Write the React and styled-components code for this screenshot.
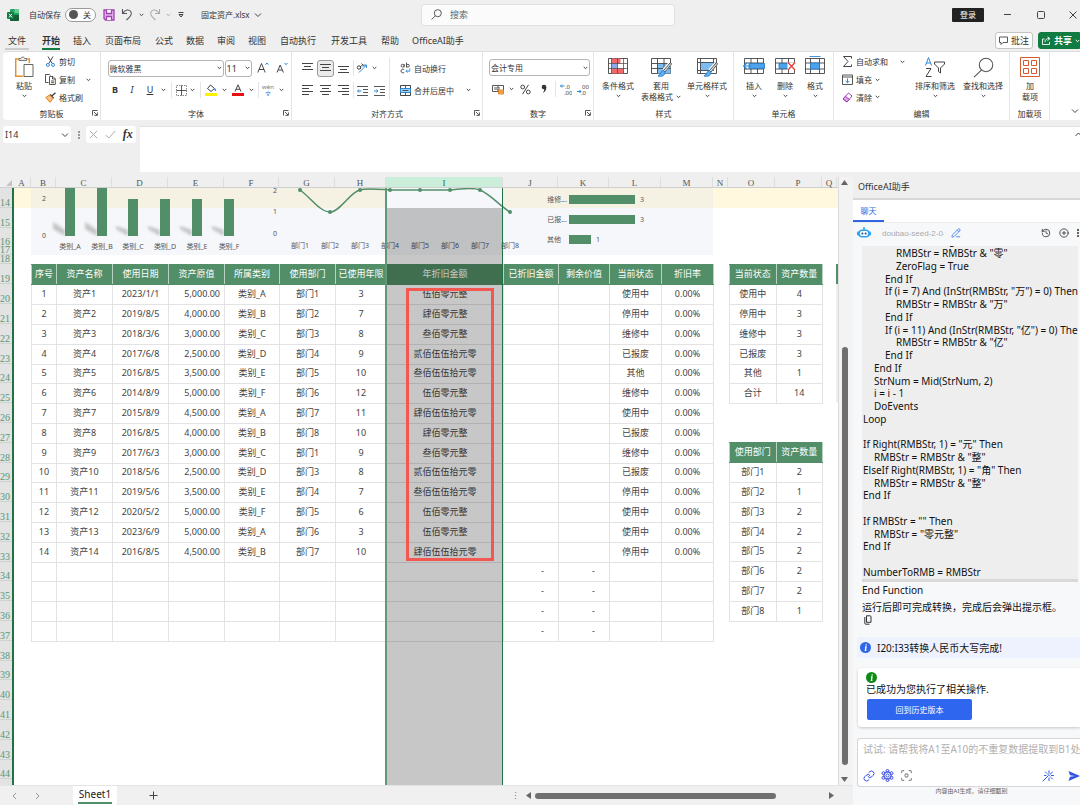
import styled, { createGlobalStyle, css } from 'styled-components'
import { CirclePlus, EllipsisVertical, Focus, History, Link, PencilLine } from 'lucide-react'

const GlobalStyle = createGlobalStyle`
  *, *::before, *::after {
    box-sizing: border-box;
  }
  body {
    margin: 0;
    overflow: hidden;
    background: #efefef;
    color: #333;
    font-family: 'Noto Sans', 'Noto Sans CJK SC', sans-serif;
    font-size: 9px;
  }
  button, input, select, textarea {
    margin: 0;
    padding: 0;
    border: 0;
    background: none;
    color: inherit;
    font: inherit;
  }
  svg {
    display: block;
    flex: none;
  }
`

const green = '#528e67'

/* ---------- shell ---------- */

const Window = styled.div`
  display: flex;
  flex-direction: column;
  height: 100vh;
`

const Workspace = styled.div`
  display: flex;
  flex: 1;
  min-height: 0;
`

const Book = styled.main`
  display: flex;
  flex-direction: column;
  flex: 1;
  min-width: 0;
`

/* ---------- title bar ---------- */

const TitleBar = styled.header`
  display: flex;
  align-items: center;
  height: 29px;
  font-size: 8px;
`

const QuickAccess = styled.div`
  display: flex;
  align-items: center;
  flex: 0 0 421px;
  padding-left: 7px;
`

const AutoSave = styled.label`
  display: flex;
  align-items: center;
  gap: 4px;
  margin: 0 7px 0 10px;
`

const Toggle = styled.span`
  display: flex;
  align-items: center;
  gap: 5px;
  width: 31px;
  height: 14px;
  padding-left: 3px;
  border: 1px solid #9a9a9a;
  border-radius: 7px;
  background: #fff;

  input {
    appearance: none;
    width: 9px;
    height: 9px;
    border-radius: 50%;
    background: #555;
  }
`

const PlainButton = styled.button`
  display: flex;
  align-items: center;
  justify-content: center;
  flex: none;
  width: ${(p) => p.$w}px;
  height: 18px;
`

const CloseButton = styled(PlainButton)`
  justify-content: flex-end;
  padding-right: 3px;
`

const FileName = styled.button`
  display: flex;
  align-items: center;
  gap: 4px;
  margin-left: 10px;
`

const SearchBox = styled.label`
  display: flex;
  align-items: center;
  gap: 8px;
  flex: 0 0 254px;
  height: 22px;
  padding-left: 9px;
  border: 1px solid #e0e0e0;
  border-radius: 3px;
  background: #fbfbfb;
  font-size: 9px;

  input {
    width: 180px;
  }
  input::placeholder {
    color: #666;
  }
`

const WindowButtons = styled.div`
  display: flex;
  align-items: center;
  margin-left: auto;
`

const Login = styled.button`
  width: 32px;
  height: 14px;
  margin-right: 7px;
  border-radius: 1px;
  background: #222;
  color: #fff;
  line-height: 14px;
`

/* ---------- ribbon tabs ---------- */

const TabBar = styled.nav`
  display: flex;
  align-items: center;
  gap: 13px;
  height: 22px;
  padding: 3px 0 0 5px;
`

const Tab = styled.button`
  min-width: ${(p) => (p.$wide ? 38 : 18)}px;
  height: 16px;
  border-bottom: 2px solid transparent;
  line-height: 14px;
  white-space: nowrap;

  ${(p) =>
    p.$file &&
    css`
      width: 24px;
      border-color: #ccc;
    `}
  ${(p) =>
    p.$active &&
    css`
      border-color: #107c41;
      font-weight: 700;
    `}
`

const TabActions = styled.div`
  display: flex;
  align-self: flex-start;
  gap: 5px;
  margin-left: auto;
`

const ActionButton = styled.button`
  display: flex;
  align-items: center;
  gap: 3px;
  width: ${(p) => (p.$primary ? 42 : 38)}px;
  height: 17px;
  padding-left: 3px;
  border: 1px solid ${(p) => (p.$primary ? '#107c41' : '#c4c4c4')};
  border-radius: ${(p) => (p.$primary ? '3px 0 0 3px' : '3px')};
  background: ${(p) => (p.$primary ? '#107c41' : '#fff')};
  color: ${(p) => (p.$primary ? '#fff' : '#333')};
  font-weight: ${(p) => (p.$primary ? 700 : 400)};
  white-space: nowrap;
`

/* ---------- ribbon ---------- */

const Ribbon = styled.section`
  display: flex;
  height: 69px;
  margin-left: 3px;
  border-top: 1px solid #dedede;
  border-radius: 4px 0 0 4px;
  background: #fff;
  font-size: 8px;
`

const Group = styled.div`
  display: flex;
  flex-direction: column;
  flex: 0 0 ${(p) => p.$w}px;
  min-width: 0;
  border-right: 1px solid #e4e4e4;
`

const GroupBody = styled.div`
  display: flex;
  height: 54px;
`

const GroupFoot = styled.div`
  display: flex;
  align-items: center;
  height: 14px;
  padding: 0 2px 0 ${(p) => (p.$plain ? 2 : 8)}px;

  span {
    flex: 1;
    text-align: center;
  }
`

const Stack = styled.div`
  display: flex;
  flex-direction: column;
  gap: ${(p) => (p.$tight ? 0 : 4)}px;
  padding: ${(p) => (p.$tight ? 1 : 7)}px 0 0 ${(p) => p.$left ?? 6}px;
  flex: 0 0 auto;
`

const Tools = styled.div`
  display: grid;
  grid-template-columns: ${(p) => p.$cols};
  align-items: center;
  justify-items: center;
  height: 18px;
`

const Tool = styled.button`
  display: grid;
  place-items: center;
  width: ${(p) => (p.$on ? '17px' : '100%')};
  height: 17px;
  border: ${(p) => (p.$on ? '1px solid #9a9a9a' : '0')};
  border-radius: 3px;
  background: ${(p) => (p.$on ? '#ebebeb' : 'none')};
`

const Letter = styled.span`
  font-size: 9px;
  line-height: 12px;
  font-weight: ${(p) => (p.$bold ? 700 : 400)};
  font-style: ${(p) => (p.$italic ? 'italic' : 'normal')};
  text-decoration: ${(p) => (p.$under ? 'underline' : 'none')};
`

const Divider = styled.i`
  width: 1px;
  height: ${(p) => (p.$tall ? 42 : 16)}px;
  margin-top: ${(p) => (p.$tall ? 6 : 0)}px;
  background: #e4e4e4;
`

const Row = styled.button`
  display: flex;
  align-items: center;
  gap: 3px;
  height: 18px;
  white-space: nowrap;

  svg:last-child {
    margin-left: ${(p) => p.$push || 0}px;
  }
`

const Big = styled.button`
  display: flex;
  flex-direction: column;
  align-items: center;
  flex: 0 0 ${(p) => p.$w}px;
  min-width: 0;
  padding-top: 3px;
  line-height: 11px;
  white-space: nowrap;
`

const BigIcon = styled.span`
  display: grid;
  place-items: center;
  height: 24px;
  margin-bottom: 1px;
`

const BigLine = styled.span`
  display: flex;
  align-items: center;
  gap: 3px;
  min-height: 10px;
`

const Picker = styled.span`
  display: grid;
  align-items: center;
  width: ${(p) => p.$w}px;
  height: 17px;

  select, svg {
    grid-area: 1 / 1;
  }
  select {
    appearance: none;
    width: 100%;
    height: 17px;
    padding-left: 1px;
    border: 1px solid #b4b4b4;
    border-radius: 3px;
    background: #fff;
    font-size: ${(p) => (p.$num ? 9 : 8)}px;
  }
  svg {
    justify-self: end;
    margin-right: 2px;
    pointer-events: none;
  }
`

const RibbonEnd = styled.div`
  display: flex;
  align-items: flex-end;
  justify-content: flex-end;
  flex: 1;
  padding: 0 1px 6px 0;
`

/* ---------- formula bar ---------- */

const FormulaBar = styled.section`
  display: flex;
  align-items: flex-start;
  height: 57px;
  padding: 6px 0 0 3px;
`

const NameBox = styled.label`
  display: flex;
  align-items: center;
  width: 68px;
  height: 17px;
  padding: 0 2px 0 2px;
  border-radius: 3px;
  background: #fff;
  font-size: 9px;

  input {
    flex: 1;
    width: 40px;
  }
`

const FxBox = styled.div`
  display: flex;
  align-items: center;
  justify-content: space-around;
  width: 50px;
  height: 17px;
  border-radius: 3px;
  background: #fff;

  em {
    font: italic bold 12px 'Liberation Serif', serif;
  }
`

const FormulaField = styled.div`
  display: flex;
  flex: 1;
  height: 46px;
  margin-left: 4px;
  padding-top: 5px;
  border-top: 1px solid #e0e0e0;
  background: #fff;

  textarea {
    flex: 1;
    height: 36px;
    resize: none;
    outline: 0;
  }
`

/* ---------- sheet ---------- */

const SheetArea = styled.div`
  display: flex;
  flex: 1;
  min-height: 0;
`

const Sheet = styled.div`
  display: flex;
  flex-direction: column;
  flex: 1;
  min-width: 0;
  overflow: hidden;
`

const ColumnHeads = styled.div`
  display: flex;
  flex: 0 0 11px;
  border-bottom: 1px solid #cfcfcf;
  font-family: 'Liberation Serif', serif;
  font-size: 9px;
  line-height: 12px;
`

const ColumnHead = styled.span`
  flex: 0 0 ${(p) => p.$w}px;
  height: 10px;
  border-right: 1px solid #dedede;
  background: ${(p) => (p.$on ? '#caeeda' : 'none')};
  color: ${(p) => (p.$on ? '#217346' : '#555')};
  text-align: center;
`

const Corner = styled.span`
  display: flex;
  align-items: flex-end;
  justify-content: flex-end;
  flex: 0 0 13px;
  padding: 0 1px 1px 0;
`

const Grid = styled.div`
  display: flex;
  flex: 1;
  min-height: 0;
  overflow: hidden;
`

const RowHeads = styled.div`
  flex: 0 0 14px;
  min-width: 0;
  border-right: 2px solid #217346;
  background: #e2e3e2;
  color: #5c9673;
  font-family: 'Liberation Serif', serif;
  font-size: 10px;
`

const rowHeight = css`
  height: 20px;

  &:nth-child(5n) {
    height: 19px;
  }
`

const RowHead = styled.div`
  display: flex;
  align-items: flex-end;
  justify-content: center;
  padding-right: 2px;
  border-bottom: 1px solid #cfd3d0;
  line-height: 9px;

  ${(p) =>
    p.$h
      ? css`
          height: ${p.$h}px;
        `
      : rowHeight}
`

const Canvas = styled.div`
  position: relative;
  flex: 1;
  min-width: 0;
  background: linear-gradient(#fff7de, #fff7de) 0 0 / 100% 20px no-repeat #fff;
`

const ActiveCell = styled.div`
  position: absolute;
  top: 0;
  left: 372px;
  width: 117px;
  height: 20px;
  background: #fff;
`

const ColumnSelection = styled.div`
  position: absolute;
  top: 0;
  bottom: 0;
  left: 371px;
  width: 118px;
  border: solid #217346;
  border-width: 0 1px 0 2px;
  border-left-color: #5f987a;

  &::before {
    content: '';
    display: block;
    height: 100%;
    background: linear-gradient(rgba(0, 0, 0, 0.22), rgba(0, 0, 0, 0.22)) 0 20px no-repeat;
  }
`

const RedFrame = styled.div`
  position: absolute;
  top: 100px;
  left: 392px;
  width: 88px;
  height: 273px;
  border: 3px solid #f2584f;
`

const Charts = styled.div`
  display: flex;
  position: relative;
  width: 682px;
  height: 67px;
  margin-left: 17px;
  background: rgba(226, 231, 242, 0.35);

  text {
    fill: #555;
    font-size: 7px;
    text-anchor: middle;
  }
`

const Tables = styled.div`
  display: flex;
  align-items: flex-start;
  padding: 9px 0 0 17px;
`

const Side = styled.div`
  display: flex;
  flex-direction: column;
  gap: 38px;
  margin: 0 13px 0 15px;
`

const NextTable = styled.div`
  flex: 1;
  height: 139px;
  background: linear-gradient(${green}, ${green}) 0 0 / 100% 20px no-repeat #eee;
`

const DataTable = styled.table`
  table-layout: fixed;
  width: ${(p) => p.$w}px;
  border-collapse: collapse;
  color: #444;
  font-size: 9px;
  line-height: 12px;

  th, td {
    padding: 0 0 2px;
    border: 1px solid #e3e3e3;
    text-align: center;
    white-space: nowrap;
  }
  thead tr {
    height: 20px;
  }
  th {
    border-color: ${green} #b9d3c2;
    background: ${green};
    color: #fff;
    font-weight: 400;
  }
  tbody tr {
    ${rowHeight}
  }
`

const Col = styled.col`
  width: ${(p) => p.$w}px;
`

const Money = styled.td`
  && {
    padding-right: ${(p) => (p.$dash ? 14 : 4)}px;
    text-align: right;
  }
`

/* ---------- scrollbars and sheet tabs ---------- */

const VScroll = styled.div`
  display: flex;
  flex-direction: column;
  align-items: center;
  width: 15px;
  padding: 2px 3px 2px 0;
  border-left: 1px solid #dcdcdc;
  background: #f3f3f3;
`

const VThumb = styled.i`
  flex: 0 1 418px;
  width: 6px;
  margin: auto 0 11px;
  border-radius: 3px;
  background: #6f6f6f;
`

const SheetBar = styled.footer`
  display: flex;
  align-items: center;
  flex: 0 0 20px;
  border-top: 1px solid #e4e4e4;
  background: #f0f0f0;
  color: #777;
`

const SheetTab = styled.button`
  width: 44px;
  height: 19px;
  margin: 0 23px 0 28px;
  border-radius: 0 0 3px 3px;
  background: #fff;
  color: #222;
  font-size: 10px;
  line-height: 15px;

  span {
    display: block;
    margin: 0 5px;
    border-bottom: 2px solid ${green};
  }
`

const HScroll = styled.div`
  display: flex;
  align-items: center;
  width: 347px;
  margin-left: auto;
  padding-right: 18px;
`

const HThumb = styled.i`
  width: 241px;
  height: 6px;
  margin: 0 auto 0 3px;
  border-radius: 3px;
  background: #6f6f6f;
`

/* ---------- assistant pane ---------- */

const Pane = styled.aside`
  display: flex;
  flex-direction: column;
  flex: 0 0 227px;
  overflow: hidden;
  background: #f7f8fa;
`

const PaneTitle = styled.h2`
  flex: 0 0 23px;
  margin: 0;
  padding: 1px 0 0 5px;
  border-bottom: 2px solid #d8d8d8;
  background: #efefef;
  font-size: 9px;
  font-weight: 400;
  line-height: 18px;
`

const PaneTabs = styled.div`
  flex: 0 0 22px;
  border-bottom: 1px solid #ececec;
  background: #fff;

  button {
    width: 31px;
    height: 22px;
    border-bottom: 2px solid #2f66e0;
    color: #2f66e0;
    font-size: 8px;
  }
`

const ModelBar = styled.div`
  display: flex;
  align-items: center;
  flex: 0 0 23px;
  padding: 0 0 3px 4px;

  input {
    width: 62px;
    margin: 0 7px 0 11px;
    color: #aaa;
    font-family: 'Liberation Sans', sans-serif;
    font-size: 8px;
  }
  button + button {
    margin-left: 8px;
  }
  button:nth-of-type(2) {
    margin-left: auto;
  }
  button:last-child {
    margin: 0 -3px 0 4px;
  }
`

const Code = styled.div`
  display: flex;
  flex-direction: column;
  justify-content: flex-end;
  flex: 0 0 336px;
  margin: 0 2px 0 9px;
  overflow: hidden;
  border-bottom: 3px solid #d9d9d9;
  background: #eeeeee;
  color: #111;
  font-size: 10px;
`

const CodeLine = styled.div`
  flex: none;
  height: 13px;
  padding-left: ${(p) => p.$level * 11 + 1}px;
  line-height: 12px;
  white-space: nowrap;

  &:nth-child(4n) {
    height: 12px;
  }
`

const Message = styled.div`
  flex: 0 0 55px;
  padding-left: 9px;
  color: #111;
  font-size: 10px;
  line-height: 17px;
  white-space: nowrap;

  div + div {
    line-height: 16px;
  }
  button {
    display: block;
    margin-left: 1px;
  }
`

const Notice = styled.div`
  display: flex;
  align-items: center;
  gap: 6px;
  flex: 0 0 21px;
  margin-left: 4px;
  padding-left: 3px;
  background: #eef2ff;
  color: #111;
  font-size: 10px;
  white-space: nowrap;
`

const Card = styled.div`
  flex: 0 0 59px;
  margin: 10px 0 0 5px;
  padding: 4px 0 0 8px;
  border-radius: 3px 0 0 3px;
  background: #fff;
  box-shadow: 0 1px 3px rgba(0, 0, 0, 0.2);
  color: #111;
  font-size: 10px;

  p {
    margin: 0;
    line-height: 13px;
    white-space: nowrap;
  }
`

const Restore = styled.button`
  width: 105px;
  height: 21px;
  margin: 3px 0 0 1px;
  border-radius: 2px;
  background: #2f66f0;
  color: #fff;
  font-size: 8px;
`

const Prompt = styled.div`
  display: flex;
  flex-direction: column;
  justify-content: space-between;
  flex: 0 0 49px;
  margin: 11px 0 0 4px;
  padding: 3px 0 4px 5px;
  border: 1px solid #d4d6da;
  border-right: 0;
  border-radius: 3px 0 0 3px;
  background: #fff;

  textarea {
    height: 16px;
    overflow: hidden;
    resize: none;
    font-size: 10px;
    line-height: 14px;
    white-space: nowrap;
  }
  textarea::placeholder {
    color: #b0b0b0;
  }
`

const PromptTools = styled.div`
  display: flex;
  align-items: center;
  gap: 6px;

  button:nth-child(4) {
    margin-left: auto;
  }
  button:nth-child(5) {
    margin-left: 8px;
  }
`

const Footnote = styled.p`
  margin: 0 0 0 10px;
  color: #666;
  font-size: 6px;
  line-height: 9px;
  text-align: center;
`

/* ---------- icons ---------- */

const Icon = ({ w = 12, h = 12, children, ...rest }) => (
  <svg width={w} height={h} viewBox={`0 0 ${w} ${h}`} fill="none" stroke="#444" aria-hidden="true" {...rest}>
    {children}
  </svg>
)

const Chevron = ({ big, color = '#444' }) =>
  big ? (
    <Icon w={8} h={6} stroke={color}>
      <path d="M1 1.5 4 4.5 7 1.5" />
    </Icon>
  ) : (
    <Icon w={5} h={4} stroke={color}>
      <path d="M.7.9 2.5 2.7 4.3.9" />
    </Icon>
  )

const Launcher = () => (
  <Icon w={6} h={6} strokeWidth=".9">
    <path d="M.5 5.5V.5h5M2 2l3 3M5.4 2.4v3h-3" />
  </Icon>
)

const ExcelLogo = () => (
  <Icon w={12} h={12} stroke="none">
    <rect x="3" y="0" width="9" height="12" rx="1" fill="#21a366" />
    <path d="M7.5 0H11a1 1 0 0 1 1 1v3H7.5z" fill="#6bd08f" />
    <path d="M3 6h9v5a1 1 0 0 1-1 1H4a1 1 0 0 1-1-1z" fill="#185c37" />
    <rect x="0" y="3" width="7" height="7" rx="1" fill="#107c41" />
    <path d="m2 4.8 3 3.6m0-3.6L2 8.4" stroke="#fff" />
  </Icon>
)

const SaveIcon = () => (
  <Icon w={12} h={12} stroke="#a33fb5" strokeWidth="1.3">
    <path d="M1 1h10v10H2.500L1 9.500z" fill="#e3b5ea" />
    <path d="M3.500 1v3.500h5V1M3.500 11V7.500h5V11" fill="#fff" />
  </Icon>
)

const Undo = ({ flip, color }) => (
  <Icon w={12} h={13} stroke={color} strokeWidth="1.1" transform={flip ? 'scale(-1 1)' : undefined}>
    <path d="M1.500 1v4.500H6M1.800 5.300C4 1.500 8 1 9.800 3.500c1.600 2.500 0 4.500-4.300 8.500" />
  </Icon>
)

const SearchGlyph = ({ size = 10 }) => (
  <Icon w={size} h={size} viewBox="0 0 10 10" stroke="#555" strokeWidth={size > 12 ? 0.5 : 0.9}>
    <circle cx="6.200" cy="3.800" r="3.200" />
    <path d="M4 6.200.5 9.600" />
  </Icon>
)

const PasteIcon = () => (
  <Icon w={20} h={22}>
    <path d="M6 3H1.700v17.300H9M12 3h3.300v4" stroke="#e8912d" strokeWidth="1.500" />
    <path d="M5 4.500V2.500h2C7 .5 10.500.5 10.500 2.500h2v2z" fill="#eee" stroke="#777" />
    <path d="M10 8.500h9v12h-9z" fill="#fff" stroke="#666" />
  </Icon>
)

const CutIcon = () => (
  <Icon w={11} h={11}>
    <path d="M3 .5 7.200 7.500M8 .5 3.800 7.500" />
    <circle cx="2.900" cy="8.900" r="1.500" stroke="#2b88d8" />
    <circle cx="8" cy="8.900" r="1.500" stroke="#2b88d8" />
  </Icon>
)

const CopyIcon = () => (
  <Icon w={11} h={11}>
    <path d="M3.500 8.500H.5v-8h4l1 1M4.500 2.500h3.500l2.300 2.300v5.700H4.500zM7.500 2.500V5h2.800M6 7h3M6 8.700h3" strokeWidth=".9" />
  </Icon>
)

const PagesIcon = () => (
  <Icon w={9} h={10} stroke="#333">
    <path d="M3.500.8h3.500a1 1 0 0 1 1 1v5.500H3.500zM1.800 2v6.200a1 1 0 0 0 1 1h3.700" />
  </Icon>
)

const BrushIcon = () => (
  <Icon w={11} h={11}>
    <path d="M10.500.8 7 3.800M5 2.500l3.700 3.700" strokeWidth="1.400" />
    <path d="M4.500 3 .8 5.500 5 10.300 8 6.500z" fill="#f6c28a" stroke="#e08020" />
  </Icon>
)

const BorderIcon = () => (
  <Icon w={11} h={11} strokeWidth=".9">
    <path d="M.5.5h10v10H.5z" stroke="#777" strokeDasharray="1.500 1" />
    <path d="M5.500.5v10M.5 5.500h10" />
  </Icon>
)

const FillIcon = () => (
  <Icon w={12} h={12}>
    <path d="M5.500 1 9.500 4.500 6 7.500 2.500 4.500z" fill="#fff" />
    <path d="M9.500 4.500c.8 1 1 1.500 1 2.500" stroke="#2b88d8" strokeWidth="1.300" />
    <rect x="0" y="9" width="12" height="3" fill="#fdf000" stroke="none" />
  </Icon>
)

const FontColorIcon = () => (
  <Icon w={12} h={12}>
    <path d="M3 7.500 6 .8l3 6.700M4 5.300h4" />
    <rect x="0" y="9" width="12" height="3" fill="#e81010" stroke="none" />
  </Icon>
)

const GrowFont = ({ down }) => (
  <Icon w={12} h={12}>
    <path d={down ? 'M1 10.500 4.200 3l3.200 7.500M2.300 8h3.900' : 'M.8 10.500 4.500 1.500l3.700 9M2 7.500h5'} />
    <path d={down ? 'M8.500 1l1.500 1.700L11.500 1' : 'M8.500 2.700 10 1l1.500 1.700'} stroke="#2b88d8" />
  </Icon>
)

const Lines = ({ rows }) => (
  <Icon w={11} h={12}>
    {rows.map(([x, y, w]) => (
      <path key={y} d={`M${x} ${y}.5h${w}`} />
    ))}
  </Icon>
)

const IndentIcon = ({ out }) => (
  <Icon w={11} h={11}>
    <path d="M0 1.500h11M6 4.500h5M6 7.500h5M0 10.500h11" strokeWidth=".9" />
    <path d={out ? 'M4.500 6h-4m1.500-1.500L.5 6 2 7.500' : 'M0 6h4M2.500 4.500 4 6 2.500 7.500'} stroke="#2b88d8" />
  </Icon>
)

const OrientIcon = () => (
  <Icon w={12} h={12}>
    <circle cx="3" cy="5.500" r="1.700" />
    <path d="M4.500 4v3M5.500 1.500l2.500 3M6 4.500C5 3 7 2 8 3.500" strokeWidth=".9" />
    <path d="M3 10.500 10.500 3M7.800 3h2.700v2.700" stroke="#2b88d8" />
  </Icon>
)

const WrapIcon = () => (
  <Icon w={11} h={12} strokeWidth=".9">
    <circle cx="2.500" cy="3.700" r="1.400" />
    <path d="M4.200 2v3.300M6.500.5v5" />
    <circle cx="7.900" cy="3.700" r="1.400" />
    <path d="M4.200 7.500C2.500 6.500 1 7.500 1 9s1.500 2.500 3.200 1.500" />
    <path d="M9.800 6.500v2.700H6m1.500-1.500L6 9.200l1.500 1.500" stroke="#2b88d8" />
  </Icon>
)

const MergeIcon = () => (
  <Icon w={11} h={11}>
    <path d="M.5.5h10v10H.5z" fill="#fff" />
    <path d="M.5 3.500h10v4H.5z" fill="#9fd0f5" stroke="#2b88d8" />
    <path d="M5.500.5v3M5.500 7.500v3M2.500 5.500h6" strokeWidth=".9" />
  </Icon>
)

const MoneyIcon = () => (
  <Icon w={13} h={11} strokeWidth=".9">
    <path d="M.5 1.500h11v6H.5z" />
    <path d="M3 3v3M5 3h2v3H5z" />
    <path d="M6.500 6h5v4h-5zM6.500 8h5" fill="#f9b871" stroke="#e08020" />
  </Icon>
)

const DecimalIcon = ({ less }) => (
  <Icon w={12} h={12} stroke="none">
    <text x="5" y="5.500" fontSize="6" fill="#444">{less ? '00' : '.0'}</text>
    <text x="4" y="11.500" fontSize="6" fill="#444">{less ? '.0' : '.00'}</text>
    <path d={less ? 'M0 8.500h4M2.500 7 4 8.500 2.500 10' : 'M4.500 3H.5M2 1.500.5 3 2 4.500'} stroke="#2b88d8" />
  </Icon>
)

const TableGrid = ({ children }) => (
  <Icon w={22} h={22} strokeWidth=".9">
    <path d="M1.500 2.500h19v15h-19z" fill="#fff" />
    {children}
  </Icon>
)

const CondIcon = () => (
  <TableGrid>
    <path d="M4.500 2.500h9v5h-9zM4.500 12.500h12v5h-12z" fill="#f2696b" stroke="none" />
    <path d="M4.500 7.500h6v5h-6z" fill="#8fa8e8" stroke="none" />
    <path d="M1.500 7.500h19M1.500 12.500h19M4.500 2.500v15M16.500 2.500v15M10.500 2.500v15" strokeWidth=".7" />
  </TableGrid>
)

const Brush = () => (
  <>
    <path d="m20.500 7-6.500 7.500" stroke="#fff" strokeWidth="4" />
    <path d="m20.500 6.500-7 8 1.500 1.500 6.500-8z" fill="#ddd" />
    <path d="M13.500 14.500c-2.500 0-2.500 4-5.500 5.500 3.500 1 7 0 7-4z" fill="#5fb0ee" stroke="#2b7bc4" />
  </>
)

const FormatTableIcon = () => (
  <TableGrid>
    <path d="M7.500 7.500h13v10h-13z" fill="#7cbcf0" stroke="none" />
    <path d="M1.500 7.500h19M1.500 12.500h19M7.500 2.500v15M14 2.500v15" />
    <Brush />
  </TableGrid>
)

const CellStyleIcon = () => (
  <TableGrid>
    <path d="M4.500 6.500h13v8h-13z" fill="#7cbcf0" />
    <path d="M1.500 6.500h3M1.500 14.500h3M17.500 6.500h3M4.500 2.500v4M17.500 2.500v4M4.500 14.500v3" />
    <Brush />
  </TableGrid>
)

const InsertIcon = () => (
  <TableGrid>
    <path d="M8 2.500v15M14.500 2.500v15M1.500 7h19M1.500 13h19" />
    <path d="M6 7.500h15.500v5H6z" fill="#4aa3ec" stroke="#2b7bc4" />
    <path d="M8 10H1m3-3-3.500 3L4 13" stroke="#2b88d8" strokeWidth="1.200" />
  </TableGrid>
)

const DeleteIcon = () => (
  <TableGrid>
    <path d="M8 2.500v15M14.500 2.500v15M1.500 7h19M1.500 13h19" />
    <path d="M5 7.500h10v5H5z" fill="#4aa3ec" stroke="#2b7bc4" />
    <path d="M13.500 6.500h8v7.500h-8z" fill="#fff" stroke="none" />
    <path d="m14 6.500 7 7.500m0-7.500L14 14" stroke="#e23b3b" strokeWidth="1.200" />
  </TableGrid>
)

const FormatIcon = () => (
  <TableGrid>
    <path d="M6.500 2.500v15M15.500 2.500v15M1.500 7h19M1.500 13h19" />
    <path d="M6.500 7h9v6h-9z" fill="#4aa3ec" stroke="#2b7bc4" />
    <path d="M5.500.5h11" stroke="#2b88d8" />
  </TableGrid>
)

const SumIcon = () => (
  <Icon w={11} h={11}>
    <path d="M9.500 2.500v-2h-8L6 5.500l-4.500 5h8v-2" />
  </Icon>
)

const FillDownIcon = () => (
  <Icon w={11} h={11}>
    <path d="M.5 1h10v9.500H.5zM.5 3h10" strokeWidth=".9" />
    <path d="M5.500 4.500v4M3.700 7l1.800 1.800L7.300 7" stroke="#2b88d8" />
  </Icon>
)

const EraserIcon = () => (
  <Icon w={11} h={11} stroke="#a33fb5">
    <path d="M6.500 1 10 4 5 10 1 7z" />
    <path d="M3.500 4.300 7.200 7.300 5 10 1 7z" fill="#dba6e3" />
  </Icon>
)

const SortIcon = () => (
  <Icon w={22} h={22}>
    <path d="M1.500 9.500 4.500 1.500l3 8M2.600 7h3.800" stroke="#2b88d8" />
    <path d="M2 12.500h5L2 20.500h5.500" />
    <path d="M10.500 6h10v2l-4 4v5l-2-1.500V12l-4-4z" />
  </Icon>
)

const AddinIcon = () => (
  <Icon w={20} h={20} stroke="#d8592c">
    <path d="M.5.5h19v19H.5zM3.500 3.500h5v5h-5zM11.500 3.500h5v5h-5zM3.500 11.500h5v5h-5zM11.500 11.500h5v5h-5z" />
  </Icon>
)

const Triangle = ({ dir }) => {
  const d = {
    up: 'M3.500 1 7 6H0z',
    down: 'M3.500 6 7 1H0z',
    left: 'M1 3.500 6 0v7z',
    right: 'M6 3.500 1 0v7z',
  }[dir]
  return (
    <Icon w={7} h={7} stroke="none">
      <path d={d} fill="#666" />
    </Icon>
  )
}

const InfoDot = ({ color }) => (
  <Icon w={11} h={11} stroke="none">
    <circle cx="5.500" cy="5.500" r="5.500" fill={color} />
    <path d="M6.200 2.300v1.300M5 4.900h1L5.400 8.300h1" stroke="#fff" strokeWidth="1.300" />
  </Icon>
)

const RobotIcon = () => (
  <Icon w={14} h={12} stroke="none">
    <path d="M7 0v3" stroke="#2ea3f2" strokeWidth="1.500" />
    <rect x="0" y="4.500" width="14" height="4" rx="1" fill="#2ea3f2" />
    <rect x="1.500" y="2.500" width="11" height="8" rx="3.500" fill="#2ea3f2" />
    <rect x="3" y="4" width="8" height="5" rx="2" fill="#fff" />
    <circle cx="5.400" cy="6.500" r="1" fill="#1c4c86" />
    <circle cx="8.600" cy="6.500" r="1" fill="#1c4c86" />
  </Icon>
)

const FlowerIcon = () => (
  <Icon w={13} h={13} stroke="#3a4fe0">
    <circle cx="6.500" cy="6.500" r="1.600" />
    <path d="M6.500 2.500 10 4.500v4l-3.500 2L3 8.500v-4z" />
    {[[6.5, 2], [10.500, 4.200], [10.500, 8.800], [6.500, 11], [2.500, 8.800], [2.500, 4.200]].map(([x, y]) => (
      <circle key={`${x}-${y}`} cx={x} cy={y} r="1.500" />
    ))}
  </Icon>
)

const WandIcon = () => (
  <Icon w={12} h={12} stroke="#2f55e0" strokeLinecap="round">
    <path d="M1 11l5-5M7 .8v2.500M7 8v2.500M2.500 5.500H4M9.500 5.500h2M3.500 2l1.300 1.300M10.500 2 8.300 4M9 7.500l1.500 1.500M5.800 4.200l2 2" />
  </Icon>
)

const SendIcon = () => (
  <Icon w={12} h={12} stroke="none">
    <path d="M.5 1 12 6 .5 11l1.500-4.200L7 6 2 5.200z" fill="#2f55e0" />
  </Icon>
)

/* ---------- data ---------- */

const columns = [
  ['A', 17], ['B', 25], ['C', 56], ['D', 56], ['E', 56], ['F', 55], ['G', 56], ['H', 51], ['I', 117],
  ['J', 55], ['K', 51], ['L', 52], ['M', 52], ['N', 15], ['O', 47], ['P', 47], ['Q', 15],
]

const topRows = [[14, 20], [15, 20], [16, 19], [17, 8], [18, 9], [19, 20]]
const sheetRows = Array.from({ length: 25 }, (_, i) => i + 20)

const tabs = ['文件', '开始', '插入', '页面布局', '公式', '数据', '审阅', '视图', '自动执行', '开发工具', '帮助', 'OfficeAI助手']

const heads = ['序号', '资产名称', '使用日期', '资产原值', '所属类别', '使用部门', '已使用年限', '年折旧金额', '已折旧金额', '剩余价值', '当前状态', '折旧率']

const assets = [
  ['2023/1/1', '5,000.00', 'A', 1, 3, '伍佰零元整', '使用中'],
  ['2019/8/5', '4,000.00', 'B', 2, 7, '肆佰零元整', '停用中'],
  ['2018/3/6', '3,000.00', 'C', 3, 8, '叁佰零元整', '维修中'],
  ['2017/6/8', '2,500.00', 'D', 4, 9, '贰佰伍伍拾元零', '已报废'],
  ['2016/8/5', '3,500.00', 'E', 5, 10, '叁佰伍伍拾元零', '其他'],
  ['2014/8/9', '5,000.00', 'F', 6, 12, '伍佰零元整', '维修中'],
  ['2015/8/9', '4,500.00', 'A', 7, 11, '肆佰伍伍拾元零', '使用中'],
  ['2016/8/5', '4,000.00', 'B', 8, 10, '肆佰零元整', '已报废'],
  ['2017/6/3', '3,000.00', 'C', 1, 9, '叁佰零元整', '维修中'],
  ['2018/5/6', '2,500.00', 'D', 3, 8, '贰佰伍伍拾元零', '已报废'],
  ['2019/5/6', '3,500.00', 'E', 4, 7, '叁佰伍伍拾元零', '停用中'],
  ['2020/5/2', '5,000.00', 'F', 5, 6, '伍佰零元整', '使用中'],
  ['2023/6/9', '5,000.00', 'A', 6, 3, '伍佰零元整', '使用中'],
  ['2016/8/5', '4,500.00', 'B', 7, 10, '肆佰伍伍拾元零', '停用中'],
]

const statusCounts = [['使用中', 4], ['停用中', 3], ['维修中', 3], ['已报废', 3], ['其他', 1], ['合计', 14]]
const deptCounts = [2, 1, 2, 2, 2, 2, 2, 1].map((n, i) => [`部门${i + 1}`, n])

const code = [
  [2, 'If Not ZeroFlag Then'],
  [3, 'RMBStr = RMBStr & "零"'],
  [3, 'ZeroFlag = True'],
  [2, 'End If'],
  [2, 'If (i = 7) And (InStr(RMBStr, "万") = 0) Then'],
  [3, 'RMBStr = RMBStr & "万"'],
  [2, 'End If'],
  [2, 'If (i = 11) And (InStr(RMBStr, "亿") = 0) Then'],
  [3, 'RMBStr = RMBStr & "亿"'],
  [2, 'End If'],
  [1, 'End If'],
  [1, 'StrNum = Mid(StrNum, 2)'],
  [1, 'i = i - 1'],
  [1, 'DoEvents'],
  [0, 'Loop'],
  [0, ''],
  [0, 'If Right(RMBStr, 1) = "元" Then'],
  [1, 'RMBStr = RMBStr & "整"'],
  [0, 'ElseIf Right(RMBStr, 1) = "角" Then'],
  [1, 'RMBStr = RMBStr & "整"'],
  [0, 'End If'],
  [0, ''],
  [0, 'If RMBStr = "" Then'],
  [1, 'RMBStr = "零元整"'],
  [0, 'End If'],
  [0, ''],
  [0, 'NumberToRMB = RMBStr'],
]

/* ---------- sections ---------- */

function Title() {
  return (
    <TitleBar>
      <QuickAccess>
        <ExcelLogo />
        <AutoSave>
          自动保存
          <Toggle>
            <input type="checkbox" />关
          </Toggle>
        </AutoSave>
        <PlainButton $w={12} aria-label="保存"><SaveIcon /></PlainButton>
        <PlainButton $w={24} aria-label="撤消"><Undo color="#555" /></PlainButton>
        <Chevron />
        <PlainButton $w={22} aria-label="恢复"><Undo flip color="#aaa" /></PlainButton>
        <Chevron color="#aaa" />
        <PlainButton $w={20} aria-label="自定义快速访问工具栏">
          <Icon w={6} h={6}><path d="M.5.5h5M1 2.500h4L3 5z" /></Icon>
        </PlainButton>
        <FileName>固定资产.xlsx <Chevron big /></FileName>
      </QuickAccess>
      <SearchBox>
        <SearchGlyph size={11} />
        <input placeholder="搜索" aria-label="搜索" />
      </SearchBox>
      <WindowButtons>
        <Login>登录</Login>
        <PlainButton $w={33} aria-label="最小化"><Icon w={7} h={7}><path d="M0 3.500h7" /></Icon></PlainButton>
        <PlainButton $w={33} aria-label="最大化"><Icon w={8} h={8}><rect x=".5" y=".5" width="7" height="7" rx="1" /></Icon></PlainButton>
        <CloseButton $w={23} aria-label="关闭"><Icon w={8} h={8}><path d="m.5.5 7 7m0-7-7 7" /></Icon></CloseButton>
      </WindowButtons>
    </TitleBar>
  )
}

function Tabs() {
  return (
    <TabBar>
      {tabs.map((tab, i) => (
        <Tab key={tab} $file={i === 0} $active={i === 1} $wide={tab.length > 2}>{tab}</Tab>
      ))}
      <TabActions>
        <ActionButton>
          <Icon w={9} h={9}><path d="M.5 1h8v5.500H4L2 8.500v-2H.5z" strokeWidth=".9" /></Icon>批注
        </ActionButton>
        <ActionButton $primary>
          <Icon w={9} h={9} stroke="#fff"><path d="M2.500 3H.5v5.500h7V6M3 6C3 3.500 5 2.500 7 2.500M5.500.8 8 2.600 5.500 4.500" strokeWidth=".9" /></Icon>
          共享 <Chevron color="#fff" />
        </ActionButton>
      </TabActions>
    </TabBar>
  )
}

const Foot = ({ name, launch }) => (
  <GroupFoot $plain={!launch}>
    <span>{name}</span>
    {launch && <Launcher />}
  </GroupFoot>
)

const BigButton = ({ w, icon, lines, chevron = true }) => (
  <Big $w={w}>
    <BigIcon>{icon}</BigIcon>
    {lines.map((line, i) => (
      <BigLine key={line}>
        {line}
        {chevron && lines.length > 1 && i === lines.length - 1 && <Chevron />}
      </BigLine>
    ))}
    {chevron && lines.length === 1 && <BigLine><Chevron /></BigLine>}
  </Big>
)

function RibbonBar() {
  return (
    <Ribbon>
      <Group $w={98}>
        <GroupBody>
          <BigButton w={42} icon={<PasteIcon />} lines={['粘贴']} />
          <Stack $tight $left={0}>
            <Row><CutIcon />剪切</Row>
            <Row $push={8}><CopyIcon />复制<Chevron /></Row>
            <Row><BrushIcon />格式刷</Row>
          </Stack>
        </GroupBody>
        <Foot name="剪贴板" launch />
      </Group>

      <Group $w={191}>
        <GroupBody>
          <Stack>
            <Tools $cols="117px 28px 22px 16px">
              <Picker $w={116}>
                <select aria-label="字体"><option>微软雅黑</option></select>
                <Chevron />
              </Picker>
              <Picker $w={27} $num>
                <select aria-label="字号"><option>11</option></select>
                <Chevron />
              </Picker>
              <Tool aria-label="增大字号"><GrowFont /></Tool>
              <Tool aria-label="减小字号"><GrowFont down /></Tool>
            </Tools>
            <Tools $cols="16px 18px 18px 8px 8px 12px 10px 6px 16px 10px 18px 8px 6px 14px 12px">
              <Tool><Letter $bold>B</Letter></Tool>
              <Tool><Letter $italic>I</Letter></Tool>
              <Tool><Letter $under>U</Letter></Tool>
              <Chevron />
              <Divider />
              <Tool aria-label="边框"><BorderIcon /></Tool>
              <Chevron />
              <Divider />
              <Tool aria-label="填充颜色"><FillIcon /></Tool>
              <Chevron />
              <Tool aria-label="字体颜色"><FontColorIcon /></Tool>
              <Chevron />
              <Divider />
              <Tool aria-label="拼音">
                <Icon w={14} h={12} stroke="none">
                  <text x="7" y="5" fontSize="6" textAnchor="middle" fill="#777">wén</text>
                  <text x="7" y="11.500" fontSize="6" textAnchor="middle" fill="#2b88d8">文</text>
                </Icon>
              </Tool>
              <Chevron />
            </Tools>
          </Stack>
        </GroupBody>
        <Foot name="字体" launch />
      </Group>

      <Group $w={191}>
        <GroupBody>
          <Stack>
            <Tools $cols="18px 18px 18px 3px 14px 10px">
              <Tool aria-label="顶端对齐"><Lines rows={[[0, 1, 11], [2, 4, 7], [0, 7, 11]]} /></Tool>
              <Tool $on aria-label="垂直居中"><Lines rows={[[0, 2, 11], [2, 5, 7], [0, 8, 11]]} /></Tool>
              <Tool aria-label="底端对齐"><Lines rows={[[0, 4, 11], [2, 7, 7], [0, 10, 11]]} /></Tool>
              <Divider />
              <Tool aria-label="方向"><OrientIcon /></Tool>
              <Chevron />
            </Tools>
            <Tools $cols="18px 18px 18px 3px 14px 20px">
              <Tool aria-label="左对齐"><Lines rows={[[0, 1, 11], [0, 4, 7], [0, 7, 11], [0, 10, 7]]} /></Tool>
              <Tool aria-label="居中"><Lines rows={[[0, 1, 11], [2, 4, 7], [0, 7, 11], [2, 10, 7]]} /></Tool>
              <Tool aria-label="右对齐"><Lines rows={[[0, 1, 11], [4, 4, 7], [0, 7, 11], [4, 10, 7]]} /></Tool>
              <Divider />
              <Tool aria-label="减少缩进"><IndentIcon out /></Tool>
              <Tool aria-label="增加缩进"><IndentIcon /></Tool>
            </Tools>
          </Stack>
          <Divider $tall />
          <Stack $left={10}>
            <Row><WrapIcon />自动换行</Row>
            <Row $push={9}><MergeIcon />合并后居中<Chevron /></Row>
          </Stack>
        </GroupBody>
        <Foot name="对齐方式" launch />
      </Group>

      <Group $w={111}>
        <GroupBody>
          <Stack>
            <Picker $w={101}>
              <select aria-label="数字格式"><option>会计专用</option></select>
              <Chevron />
            </Picker>
            <Tools $cols="18px 8px 20px 18px 4px 18px 16px">
              <Tool aria-label="会计数字格式"><MoneyIcon /></Tool>
              <Chevron />
              <Tool aria-label="百分比样式">
                <Icon w={11} h={11}>
                  <circle cx="2.700" cy="3" r="1.900" /><circle cx="8.300" cy="8" r="1.900" /><path d="M8.500.8 2.500 10.200" />
                </Icon>
              </Tool>
              <Tool aria-label="千位分隔样式">
                <Icon w={6} h={10} stroke="none">
                  <circle cx="3" cy="3" r="2.300" fill="#333" /><path d="M5.300 3c.2 3-1.300 5-3.500 6C3 7.500 3.500 6 3 4z" fill="#333" />
                </Icon>
              </Tool>
              <Divider />
              <Tool aria-label="增加小数位数"><DecimalIcon /></Tool>
              <Tool aria-label="减少小数位数"><DecimalIcon less /></Tool>
            </Tools>
          </Stack>
        </GroupBody>
        <Foot name="数字" launch />
      </Group>

      <Group $w={140}>
        <GroupBody>
          <BigButton w={48} icon={<CondIcon />} lines={['条件格式']} />
          <BigButton w={38} icon={<FormatTableIcon />} lines={['套用', '表格格式']} />
          <BigButton w={54} icon={<CellStyleIcon />} lines={['单元格样式']} />
        </GroupBody>
        <Foot name="样式" />
      </Group>

      <Group $w={100}>
        <GroupBody>
          <BigButton w={40} icon={<InsertIcon />} lines={['插入']} />
          <BigButton w={22} icon={<DeleteIcon />} lines={['删除']} />
          <BigButton w={38} icon={<FormatIcon />} lines={['格式']} />
        </GroupBody>
        <Foot name="单元格" />
      </Group>

      <Group $w={176}>
        <GroupBody>
          <Stack $tight $left={8}>
            <Row $push={9}><SumIcon />自动求和<Chevron /></Row>
            <Row><FillDownIcon />填充<Chevron /></Row>
            <Row><EraserIcon />清除<Chevron /></Row>
          </Stack>
          <BigButton w={60} icon={<SortIcon />} lines={['排序和筛选']} />
          <BigButton w={36} icon={<SearchGlyph size={21} />} lines={['查找和选择']} />
        </GroupBody>
        <Foot name="编辑" />
      </Group>

      <Group $w={40}>
        <GroupBody>
          <BigButton w={40} icon={<AddinIcon />} lines={['加', '载项']} chevron={false} />
        </GroupBody>
        <Foot name="加载项" />
      </Group>
      <RibbonEnd><Chevron big /></RibbonEnd>
    </Ribbon>
  )
}

function Formula() {
  return (
    <FormulaBar>
      <NameBox>
        <input defaultValue="I14" aria-label="名称框" />
        <Chevron big />
      </NameBox>
      <PlainButton $w={15} aria-label="调整">
        <Icon w={2} h={9} stroke="none">
          {[0, 3, 6].map((y) => <rect key={y} y={y} width="2" height="2" fill="#999" />)}
        </Icon>
      </PlainButton>
      <FxBox>
        <Icon w={9} h={9} stroke="#aaa"><path d="m.8.8 7.400 7.400m0-7.400L.8 8.200" /></Icon>
        <Icon w={11} h={9} stroke="#aaa"><path d="m.8 5 3 3L10.200 1" /></Icon>
        <em>fx</em>
      </FxBox>
      <FormulaField>
        <textarea aria-label="编辑栏" />
        <Icon w={5} h={5}><path d="M.5 4 3.500 1l3 3" /></Icon>
      </FormulaField>
    </FormulaBar>
  )
}

const bars = [[34, -5], [66, -5], [97, 11], [129, 11], [161, 11], [193, 11]]

function BarChart() {
  return (
    <svg width="230" height="67" role="img" aria-label="类别">
      <defs>
        <filter id="soft"><feGaussianBlur stdDeviation="1.500" /></filter>
      </defs>
      <text x="13" y="13">2</text>
      <text x="13" y="50">0</text>
      {bars.map(([x, y], i) => (
        <g key={x}>
          <path d={`M${x} 48 L${x} 42 L${x - 12} ${y < 0 ? 34 : 38} L${x - 12} 41z`} fill="#999" opacity=".55" filter="url(#soft)" />
          <rect x={x} y={y} width="10" height={48 - y} fill={green} />
          <text x={x + 5} y="61">类别_{'ABCDEF'[i]}</text>
        </g>
      ))}
    </svg>
  )
}

function LineChart() {
  const points = [2, 1, 2, 2, 2, 2, 2, 1].map((v, i) => [39 + i * 30, v === 2 ? 2 : 24])
  return (
    <svg width="270" height="67" role="img" aria-label="部门">
      <text x="14" y="5">2</text>
      <text x="14" y="26">1</text>
      <text x="14" y="48">0</text>
      <path
        d="M39 2C49 9 59 24 69 24S89 4 99 2C106 0 114 1 129 2H189C201 1 211-1 219 2C229 6 239 18 249 24"
        fill="none"
        stroke={green}
        strokeWidth="1.500"
      />
      {points.map(([x, y], i) => (
        <g key={x}>
          <circle cx={x} cy={y} r="2" fill={green} />
          <text x={x} y="60">部门{i + 1}</text>
        </g>
      ))}
    </svg>
  )
}

function StatusChart() {
  return (
    <svg width="182" height="67" role="img" aria-label="状态">
      {[['维修...', 3], ['已报...', 3], ['其他', 1]].map(([name, n], i) => (
        <g key={name}>
          <text x={n > 1 ? 26 : 23} y={14 + i * 20}>{name}</text>
          <rect x="38" y={7 + i * 20} width={n * 22} height="9" fill={green} />
          <text x={45 + n * 22} y={14 + i * 20}>{n}</text>
        </g>
      ))}
    </svg>
  )
}

function AssetTable() {
  return (
    <DataTable $w={682}>
      <colgroup>
        {columns.slice(1, 13).map(([name, w]) => <Col key={name} $w={w} />)}
      </colgroup>
      <thead>
        <tr>{heads.map((head) => <th key={head}>{head}</th>)}</tr>
      </thead>
      <tbody>
        {assets.map(([date, value, type, dept, years, rmb, status], i) => (
          <tr key={i}>
            <td>{i + 1}</td>
            <td>资产{i + 1}</td>
            <td>{date}</td>
            <Money>{value}</Money>
            <td>类别_{type}</td>
            <td>部门{dept}</td>
            <td>{years}</td>
            <td>{rmb}</td>
            <td />
            <td />
            <td>{status}</td>
            <td>0.00%</td>
          </tr>
        ))}
        {[34, 35, 36, 37].map((row) => (
          <tr key={row}>
            {columns.slice(1, 13).map(([name]) =>
              name === 'J' || name === 'K' ? <Money key={name} $dash>-</Money> : <td key={name} />
            )}
          </tr>
        ))}
      </tbody>
    </DataTable>
  )
}

const CountTable = ({ head, rows }) => (
  <DataTable $w={94}>
    <thead>
      <tr><th>{head}</th><th>资产数量</th></tr>
    </thead>
    <tbody>
      {rows.map(([name, n]) => (
        <tr key={name}><td>{name}</td><td>{n}</td></tr>
      ))}
    </tbody>
  </DataTable>
)

function Worksheet() {
  return (
    <SheetArea>
      <Sheet>
        <ColumnHeads>
          <Corner>
            <Icon w={6} h={6} stroke="none"><path d="M6 0v6H0z" fill="#c4c4c4" /></Icon>
          </Corner>
          {columns.map(([name, w]) => (
            <ColumnHead key={name} $w={name === 'A' ? w + 1 : w} $on={name === 'I'}>{name}</ColumnHead>
          ))}
        </ColumnHeads>
        <Grid>
          <RowHeads>
            {topRows.map(([row, h]) => <RowHead key={row} $h={h}>{row}</RowHead>)}
            <div>{sheetRows.map((row) => <RowHead key={row}>{row}</RowHead>)}</div>
          </RowHeads>
          <Canvas>
            <ActiveCell />
            <Charts>
              <BarChart />
              <LineChart />
              <StatusChart />
            </Charts>
            <Tables>
              <AssetTable />
              <Side>
                <CountTable head="当前状态" rows={statusCounts} />
                <CountTable head="使用部门" rows={deptCounts} />
              </Side>
              <NextTable />
            </Tables>
            <ColumnSelection />
            <RedFrame />
          </Canvas>
        </Grid>
      </Sheet>
      <VScroll>
        <Triangle dir="up" />
        <VThumb />
        <Triangle dir="down" />
      </VScroll>
    </SheetArea>
  )
}

function SheetTabs() {
  return (
    <SheetBar>
      <PlainButton $w={29} aria-label="上一个"><Icon w={5} h={8} stroke="#999"><path d="M4 1 1 4l3 3" /></Icon></PlainButton>
      <PlainButton $w={16} aria-label="下一个"><Icon w={5} h={8} stroke="#999"><path d="m1 1 3 3-3 3" /></Icon></PlainButton>
      <SheetTab><span>Sheet1</span></SheetTab>
      <PlainButton $w={26} aria-label="新建工作表"><Icon w={9} h={9}><path d="M4.500.5v8M.5 4.500h8" /></Icon></PlainButton>
      <HScroll>
        <PlainButton $w={19} aria-label="拆分">⋮</PlainButton>
        <Triangle dir="left" />
        <HThumb />
        <Triangle dir="right" />
      </HScroll>
    </SheetBar>
  )
}

function Assistant() {
  return (
    <Pane>
      <PaneTitle>OfficeAI助手</PaneTitle>
      <PaneTabs><button>聊天</button></PaneTabs>
      <ModelBar>
        <RobotIcon />
        <input defaultValue="doubao-seed-2-0-l" aria-label="模型" />
        <button aria-label="编辑"><PencilLine size={10} color="#3b7df0" /></button>
        <button aria-label="历史"><History size={10} color="#333" /></button>
        <button aria-label="新对话"><CirclePlus size={10} color="#333" /></button>
        <button aria-label="更多"><EllipsisVertical size={10} color="#333" strokeWidth={3} /></button>
      </ModelBar>
      <Code>
        {code.map(([level, text], i) => <CodeLine key={i} $level={level}>{text}</CodeLine>)}
      </Code>
      <Message>
        <div>End Function</div>
        <div>运行后即可完成转换，完成后会弹出提示框。</div>
        <button aria-label="复制"><PagesIcon /></button>
      </Message>
      <Notice><InfoDot color="#2f66e8" />I20:I33转换人民币大写完成!</Notice>
      <Card>
        <InfoDot color="#0e8a16" />
        <p>已成功为您执行了相关操作.</p>
        <Restore>回到历史版本</Restore>
      </Card>
      <Prompt>
        <textarea placeholder="试试: 请帮我将A1至A10的不重复数据提取到B1处" aria-label="输入" />
        <PromptTools>
          <button aria-label="链接"><Link size={12} color="#3a4fe0" /></button>
          <button aria-label="模型设置"><FlowerIcon /></button>
          <button aria-label="截图"><Focus size={13} color="#888" /></button>
          <button aria-label="优化"><WandIcon /></button>
          <button aria-label="发送"><SendIcon /></button>
        </PromptTools>
      </Prompt>
      <Footnote>内容由AI生成，请仔细甄别</Footnote>
    </Pane>
  )
}

export default function App() {
  return (
    <Window>
      <GlobalStyle />
      <Title />
      <Tabs />
      <RibbonBar />
      <Formula />
      <Workspace>
        <Book>
          <Worksheet />
          <SheetTabs />
        </Book>
        <Assistant />
      </Workspace>
    </Window>
  )
}
